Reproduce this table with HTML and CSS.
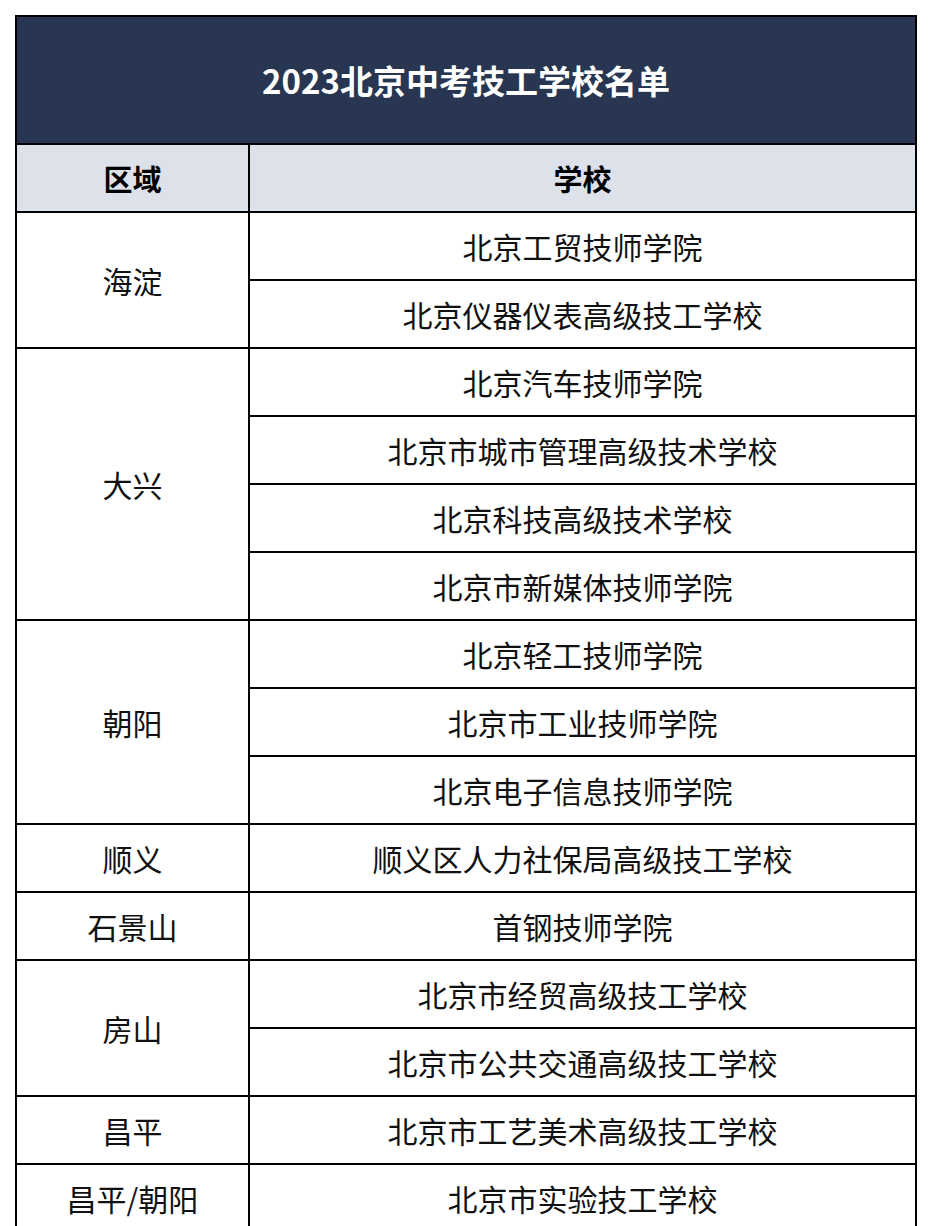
FILE: index.html
```html
<!DOCTYPE html>
<html lang="zh-CN">
<head>
<meta charset="utf-8">
<title>2023北京中考技工学校名单</title>
<link rel="stylesheet" href="styles.css">
</head>
<body>
<table class="list">
  <colgroup><col class="c-area"><col class="c-school"></colgroup>
  <thead>
    <tr class="title-row"><th colspan="2" class="title">2023北京中考技工学校名单</th></tr>
    <tr class="head-row"><th>区域</th><th>学校</th></tr>
  </thead>
  <tbody>
    <tr><td rowspan="2">海淀</td><td>北京工贸技师学院</td></tr>
    <tr><td>北京仪器仪表高级技工学校</td></tr>
    <tr><td rowspan="4">大兴</td><td>北京汽车技师学院</td></tr>
    <tr><td>北京市城市管理高级技术学校</td></tr>
    <tr><td>北京科技高级技术学校</td></tr>
    <tr><td>北京市新媒体技师学院</td></tr>
    <tr><td rowspan="3">朝阳</td><td>北京轻工技师学院</td></tr>
    <tr><td>北京市工业技师学院</td></tr>
    <tr><td>北京电子信息技师学院</td></tr>
    <tr><td>顺义</td><td>顺义区人力社保局高级技工学校</td></tr>
    <tr><td>石景山</td><td>首钢技师学院</td></tr>
    <tr><td rowspan="2">房山</td><td>北京市经贸高级技工学校</td></tr>
    <tr><td>北京市公共交通高级技工学校</td></tr>
    <tr><td>昌平</td><td>北京市工艺美术高级技工学校</td></tr>
    <tr><td>昌平/朝阳</td><td>北京市实验技工学校</td></tr>
  </tbody>
</table>
</body>
</html>
```

FILE: styles.css
```css
html, body {
  margin: 0;
  padding: 0;
  background: #ffffff;
}
body {
  padding: 15px 0 0 15px;
  font-family: "Noto Sans CJK SC", "Noto Sans", sans-serif;
  color: #111111;
}
.list {
  border-collapse: collapse;
  width: 900px;
  table-layout: fixed;
}
.c-area { width: 233px; }
.c-school { width: 667px; }
.list th, .list td {
  border: 2px solid #000000;
  padding: 0;
  height: 66px;
  text-align: center;
  vertical-align: middle;
  font-size: 30px;
  font-weight: 400;
  line-height: 1;
}
.title-row .title {
  height: 126px;
  background: #283652;
  color: #ffffff;
  font-size: 33px;
  font-weight: 700;
}
.head-row th {
  background: #dce1ea;
  color: #000000;
  font-weight: 700;
  font-size: 29px;
}
```
